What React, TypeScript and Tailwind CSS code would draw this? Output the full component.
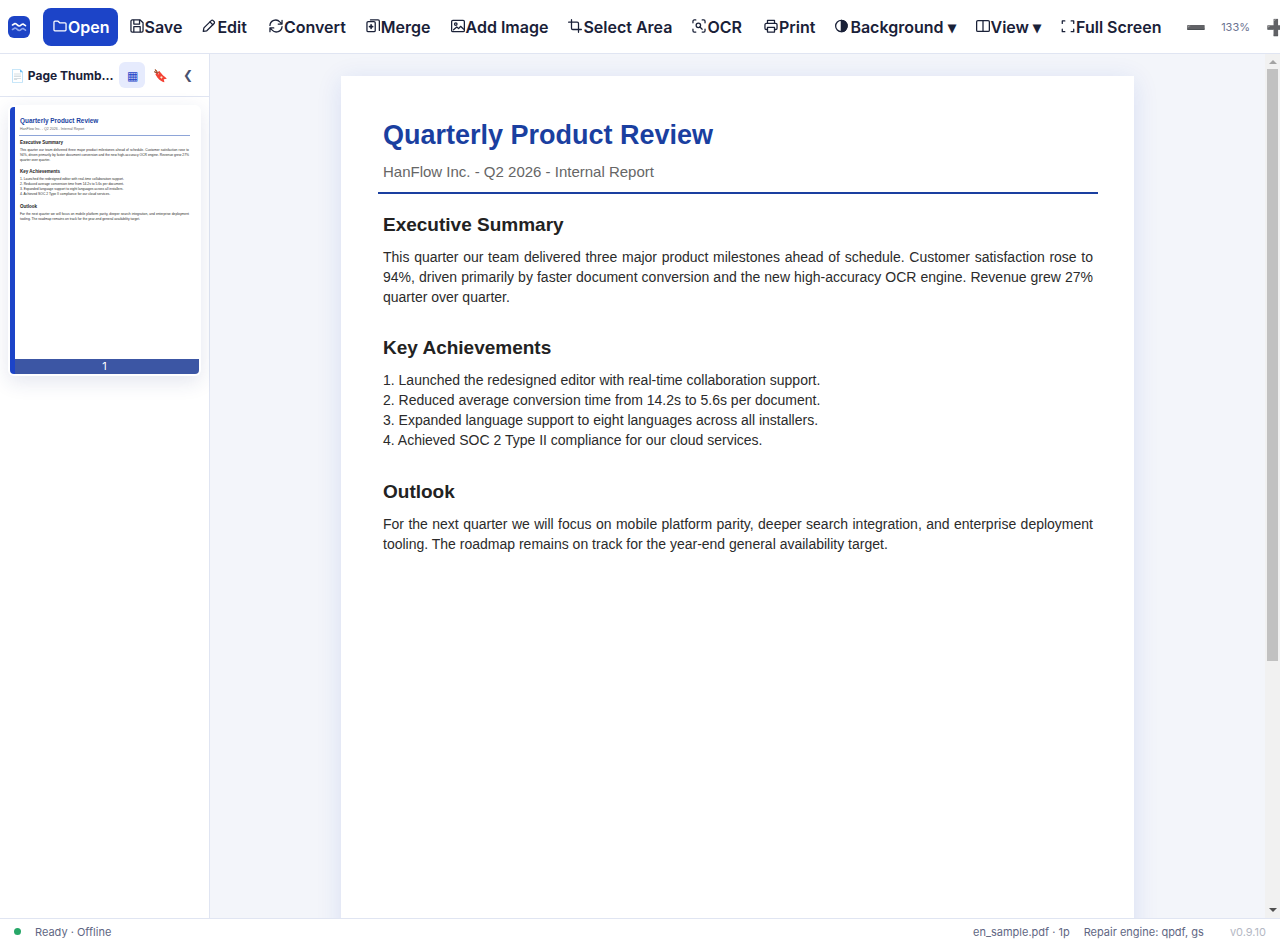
import type { ReactNode } from "react";

type Tool = {
  label: string;
  icon: ReactNode;
  primary?: boolean;
};

function Icon({ children }: { children: ReactNode }) {
  return (
    <svg
      viewBox="1 1 22 22"
      className="mb-px h-3.5 w-3.5 shrink-0"
      fill="none"
      stroke="currentColor"
      strokeWidth="2"
      strokeLinecap="round"
      strokeLinejoin="round"
      aria-hidden="true"
    >
      {children}
    </svg>
  );
}

const toolGroups: Tool[][] = [
  [
    {
      label: "Open",
      primary: true,
      icon: <path d="M2.500 6A1.500 1.500 0 0 1 4 4.500h5L11.500 7H20A1.500 1.500 0 0 1 21.500 8.500V18a1.500 1.500 0 0 1-1.500 1.500H4A1.500 1.500 0 0 1 2.500 18z" />,
    },
    {
      label: "Save",
      icon: (
        <>
          <path d="M4.500 2.500h12.500l4.500 4.500v12.500a2 2 0 0 1-2 2h-15a2 2 0 0 1-2-2v-15a2 2 0 0 1 2-2z" />
          <path d="M7 3v6h9V3M7 21v-8h10v8" />
        </>
      ),
    },
    {
      label: "Edit",
      icon: (
        <>
          <path d="M3 20.500l1-5.500L15.500 3.500a2.100 2.100 0 0 1 3 0l1.500 1.500a2.100 2.100 0 0 1 0 3L8.500 19.500z" />
          <path d="M13.500 5.500l4.500 4.500" />
        </>
      ),
    },
  ],
  [
    {
      label: "Convert",
      icon: (
        <>
          <path d="M2.500 11A9 9 0 0 1 18 5.500L21.500 9M21.500 3v6h-6" />
          <path d="M21.500 13A9 9 0 0 1 6 18.500L2.500 15M2.500 21v-6h6" />
        </>
      ),
    },
    {
      label: "Merge",
      icon: (
        <>
          <rect x="2.500" y="5" width="13" height="16" rx="2" />
          <path d="M8 2.500h12a2 2 0 0 1 2 2V19" />
          <path d="M9 10v6M6.500 13h5" strokeWidth="2.500" />
        </>
      ),
    },
    {
      label: "Add Image",
      icon: (
        <>
          <rect x="2" y="3" width="20" height="18" rx="2" />
          <circle cx="8.500" cy="9" r="2" />
          <path d="M5 18l5-4.500 3 2.500 3-3.500 5 4.500" />
        </>
      ),
    },
    {
      label: "Select Area",
      icon: <path d="M6.500 2v13.500a2 2 0 0 0 2 2H22M2 6h13.500a2 2 0 0 1 2 2v14" />,
    },
    {
      label: "OCR",
      icon: (
        <>
          <path d="M2.500 7V4.500a2 2 0 0 1 2-2H7M17 2.500h2.500a2 2 0 0 1 2 2V7M21.500 17v2.500a2 2 0 0 1-2 2H17M7 21.500H4.500a2 2 0 0 1-2-2V17" />
          <circle cx="11" cy="11" r="3.500" />
          <path d="M13.500 13.500L17 17" />
        </>
      ),
    },
  ],
  [
    {
      label: "Print",
      icon: (
        <>
          <path d="M6.500 8V3h11v5M6 17.500H4.500a2 2 0 0 1-2-2V10a2 2 0 0 1 2-2h15a2 2 0 0 1 2 2v5.500a2 2 0 0 1-2 2H18" />
          <rect x="6.500" y="14" width="11" height="7.500" />
        </>
      ),
    },
    {
      label: "Background ▾",
      icon: (
        <>
          <circle cx="11" cy="12" r="9" />
          <path d="M11 3a9 9 0 0 1 0 18z" fill="currentColor" />
        </>
      ),
    },
    {
      label: "View ▾",
      icon: (
        <>
          <rect x="2" y="3.500" width="20" height="17" rx="2" />
          <path d="M12 3.500v17" />
        </>
      ),
    },
    {
      label: "Full Screen",
      icon: <path d="M3 8V4h4M17 4h4v4M21 17v4h-4M7 21H3v-4" />,
    },
  ],
];

const achievements = [
  "1. Launched the redesigned editor with real-time collaboration support.",
  "2. Reduced average conversion time from 14.2s to 5.6s per document.",
  "3. Expanded language support to eight languages across all installers.",
  "4. Achieved SOC 2 Type II compliance for our cloud services.",
];

function Logo() {
  return (
    <svg viewBox="0 0 22 22" className="mr-[13px] h-[22px] w-[22px] shrink-0" fill="none" role="img" aria-label="HanFlow">
      <rect width="22" height="22" rx="6" fill="#1d44c6" />
      <g strokeWidth="1.600" strokeLinecap="round" strokeLinejoin="round">
        <path d="M4.500 9l2.500-1.500c1.500 0 2.500 2.500 4.200 2.500S13.500 8 15 8l2.500 1.700" stroke="#fff" />
        <path d="M4.500 13.500L7 12c1.500 0 2.500 2.500 4.200 2.500s2.300-2 3.800-2l2.500 1.700" stroke="#8fa6ee" />
      </g>
    </svg>
  );
}

function Toolbar() {
  return (
    <header className="flex h-[54px] shrink-0 items-center overflow-hidden border-b border-[#e0e5f2] bg-white pl-2">
      <Logo />
      <div className="flex shrink-0 items-center gap-1">
        {toolGroups.map((group) => (
          <div key={group[0].label} className="flex shrink-0 items-center gap-0.5">
            {group.map((tool) => (
              <button
                key={tool.label}
                type="button"
                className={`flex h-[38px] shrink-0 items-center gap-px rounded-lg pr-2 pl-2.5 text-base font-semibold whitespace-nowrap ${
                  tool.primary ? "bg-[#1c44c8] text-white" : "text-[#1a2138]"
                }`}
              >
                <Icon>{tool.icon}</Icon>
                {tool.label}
              </button>
            ))}
          </div>
        ))}
      </div>
      <div className="ml-2 flex shrink-0 items-center text-[#1a2138]">
        <button type="button" aria-label="Zoom out" className="px-2 text-base">
          ➖
        </button>
        <span className="w-11 pt-px text-center text-[11px] leading-4 text-[#6b7390]">133%</span>
        <button type="button" aria-label="Zoom in" className="px-2 text-base">
          ➕
        </button>
      </div>
    </header>
  );
}

function ReportPage({ rule = "border-[#1a3fa0]" }: { rule?: string }) {
  return (
    <article className="h-[1122px] w-[793px] shrink-0 bg-white pt-[41px] pr-9 pl-[37px] font-['Liberation_Sans',Arial,sans-serif] text-sm leading-5 text-[#2b2b2b]">
      <div className={`border-b-2 px-[5px] pb-2.5 ${rule}`}>
        <h1 className="text-[27px] leading-9 font-bold text-[#1a3fa0]">Quarterly Product Review</h1>
        <p className="mt-[9px] text-[15px] leading-5 text-[#666666]">HanFlow Inc. - Q2 2026 - Internal Report</p>
      </div>
      <div className="px-[5px]">
        <h2 className="mt-[19px] text-[19px] leading-6 font-bold text-[#222222]">Executive Summary</h2>
        <p className="mt-2.5 text-justify">
          This quarter our team delivered three major product milestones ahead of schedule. Customer satisfaction rose
          to 94%, driven primarily by faster document conversion and the new high-accuracy OCR engine. Revenue grew 27%
          quarter over quarter.
        </p>
        <h2 className="mt-[29px] text-[19px] leading-6 font-bold text-[#222222]">Key Achievements</h2>
        <ol className="mt-2.5">
          {achievements.map((item) => (
            <li key={item}>{item}</li>
          ))}
        </ol>
        <h2 className="mt-[30px] text-[19px] leading-6 font-bold text-[#222222]">Outlook</h2>
        <p className="mt-2.5 text-justify">
          For the next quarter we will focus on mobile platform parity, deeper search integration, and enterprise
          deployment tooling. The roadmap remains on track for the year-end general availability target.
        </p>
      </div>
    </article>
  );
}

function Sidebar() {
  return (
    <aside className="flex w-[210px] shrink-0 flex-col border-r border-[#e0e5f2] bg-white">
      <div className="flex h-[43px] shrink-0 items-center border-b border-[#e0e5f2] pr-2 pl-2.5">
        <h2 className="flex-1 pt-px text-xs font-bold whitespace-nowrap text-[#1a2138]">📄 Page Thumb...</h2>
        <div className="flex shrink-0 gap-0.5 text-xs text-[#4a5270]">
          <button type="button" aria-label="Thumbnails" className="h-[26px] w-[26px] rounded-md bg-[#e6ebfd] pt-0.5 text-[#1c44c8]">
            ▦
          </button>
          <button type="button" aria-label="Bookmarks" className="h-[26px] w-[26px] rounded-md pt-0.5">
            🔖
          </button>
          <button type="button" aria-label="Collapse panel" className="h-[26px] w-[26px] rounded-md">
            ❮
          </button>
        </div>
      </div>
      <div className="p-2">
        <button
          type="button"
          aria-label="Page 1"
          className="block w-full rounded-md bg-white p-0.5 shadow-[0_6px_20px_rgba(30,50,120,0.12)]"
        >
          <span className="relative block h-[267px] overflow-hidden rounded text-left">
            <span className="block [zoom:0.238]" aria-hidden="true">
              <ReportPage rule="border-[#8ea5d8]" />
            </span>
            <span className="absolute inset-y-0 left-0 w-[5px] bg-[#1c44c8]" />
            <span className="absolute right-0 bottom-0 left-[5px] h-[15px] bg-[#3c56a4] pr-[5px] text-center text-[11px] leading-[15px] text-white">
              1
            </span>
          </span>
        </button>
      </div>
    </aside>
  );
}

function ScrollTrack() {
  return (
    <div className="flex w-[15px] shrink-0 flex-col items-center bg-[#f1f1f1]" aria-hidden="true">
      <svg viewBox="0 0 15 15" className="h-[15px] w-[15px] shrink-0">
        <path d="M4 10l4-4 4 4z" fill="#a3a3a3" />
      </svg>
      <div className="flex w-full flex-1 flex-col px-0.5">
        <div className="h-[71%] bg-[#c1c1c1]" />
      </div>
      <svg viewBox="0 0 15 15" className="h-[15px] w-[15px] shrink-0">
        <path d="M4 5l4 4 4-4z" fill="#505050" />
      </svg>
    </div>
  );
}

function StatusBar() {
  return (
    <footer className="flex h-[26px] shrink-0 items-center gap-3.5 border-t border-[#e0e5f2] bg-white px-3.5 text-[11px] leading-4 text-[#5f6783]">
      <span className="h-[7px] w-[7px] rounded-full bg-[#27a768]" />
      <span className="flex-1">Ready · Offline</span>
      <span>en_sample.pdf · 1p</span>
      <span>Repair engine: qpdf, gs</span>
      <span className="ml-3 text-[#b4b8c4]">v0.9.10</span>
    </footer>
  );
}

export default function App() {
  return (
    <div className="flex h-screen flex-col overflow-hidden bg-white font-['Inter','Noto_Sans',sans-serif]">
      <Toolbar />
      <div className="flex min-h-0 flex-1">
        <Sidebar />
        <main className="min-w-0 flex-1 overflow-y-auto bg-[#f3f5fa] [scrollbar-width:none]">
          <div className="flex justify-center pt-[22px] pb-[75px]">
            <div className="shadow-[0_4px_24px_rgba(28,68,200,0.12)]">
              <ReportPage />
            </div>
          </div>
        </main>
        <ScrollTrack />
      </div>
      <StatusBar />
    </div>
  );
}
